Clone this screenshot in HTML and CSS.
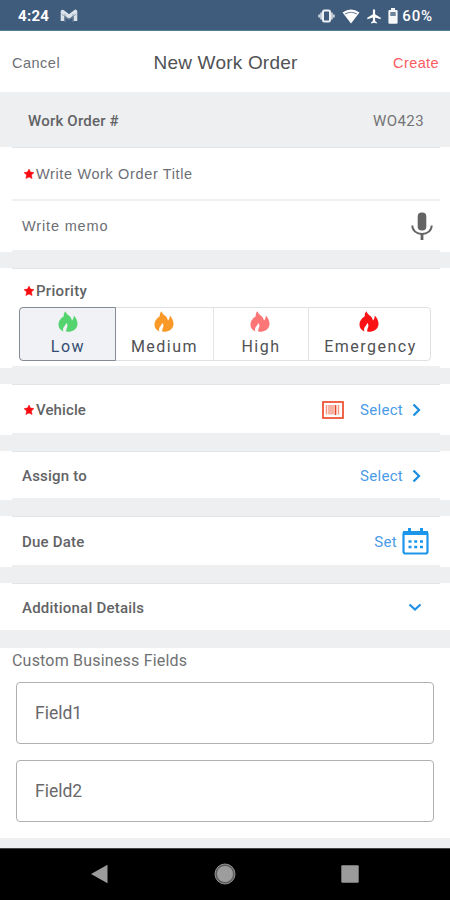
FILE: index.html
```html
<!DOCTYPE html>
<html lang="en">
<head>
<meta charset="utf-8">
<title>New Work Order</title>
<link rel="stylesheet" href="styles.css">
</head>
<body>
<svg class="defs" width="0" height="0">
  <symbol id="flame" viewBox="0 0 20 21"><path d="M7.600 .2C6.300 1.500 5.400 3 5.800 5.200C3 7.200 .5 9.800 .5 13.700C.5 16.800 2.200 19.200 5.400 20.400C4.600 18.300 5.100 16.400 6.600 14.900C7.500 14 8 13.100 8.200 12C9.400 13 9.700 14.200 9.300 15.500C8.900 17.200 8 18.300 8.200 20.500C9.500 20.900 11.200 20.900 12.600 20.600C16.800 19.700 19.500 16.600 19.500 12.800C19.500 9.500 18 6.600 15.700 4.500C15.700 6.500 15.400 8.300 14 9.500C13.300 8 13.100 6.800 12 5.600C10.400 3.900 7.900 2.800 7.600 .2Z" fill="currentColor"/></symbol>
  <symbol id="star" viewBox="0 0 10 10"><path d="M5 0L6.500 3.100L10 3.600L7.400 6L8.100 9.600L5 7.900L1.900 9.600L2.600 6L0 3.600L3.500 3.100Z" fill="#f90a10" stroke="#f90a10" stroke-width=".5"/></symbol>
  <symbol id="chevron" viewBox="0 0 9 14"><path d="M1.500 1.500L7 7L1.500 12.500" fill="none" stroke="#1e8ee0" stroke-width="2.300"/></symbol>
</svg>

<div class="status">
  <span class="clock">4:24</span>
  <svg class="mail" width="18" height="14" viewBox="0 0 18 14"><path d="M2.500 12V2.500L9 7.500L15.500 2.500V12" fill="none" stroke="#dbe2e9" stroke-width="3.600" stroke-linejoin="round"/><path d="M5 5V13M13 5V13M1.500 5L9 10.500L16.500 5" fill="none" stroke="#7f93a8" stroke-width=".8"/></svg>
  <div class="tray">
    <svg width="17" height="14" viewBox="0 0 17 14"><rect x="5" y="1.400" width="7" height="11.200" rx="1.500" fill="none" stroke="#eef2f6" stroke-width="2"/><path d="M3.200 3.500V10.500M13.800 3.500V10.500M1.200 5.500V8.500M15.800 5.500V8.500" stroke="#c9d4df" stroke-width="1.900"/></svg>
    <svg width="18" height="15" viewBox="0 0 18 15"><path d="M.5 3.500Q9-2.500 17.500 3.500L9 14.500Z" fill="#fff"/><path d="M3.200 5Q9 1.500 14.800 5" fill="none" stroke="#7289a1" stroke-width="1.100"/></svg>
    <svg width="14" height="15" viewBox="0 0 14 15"><path d="M7 .3C7.800 .3 8.100 1 8.100 1.800V5.200L13.700 8.800V10.300L8.100 8.500V12L9.800 13.300V14.500L7 13.700L4.200 14.500V13.300L5.900 12V8.500L.3 10.300V8.800L5.900 5.200V1.800C5.900 1 6.200 .3 7 .3Z" fill="#fff"/></svg>
    <svg width="10" height="16" viewBox="0 0 10 16"><path d="M3 0H7V2H8.500Q9.600 2 9.600 3V14.700Q9.600 15.700 8.500 15.700H1.500Q.4 15.700 .4 14.700V3Q.4 2 1.500 2H3Z" fill="#f5f7f9"/><path d="M2.300 4H7.700V8H2.300Z" fill="#6d849b"/></svg>
  </div>
  <span class="percent">60%</span>
</div>

<header class="header">
  <span class="cancel">Cancel</span>
  <span class="heading">New Work Order</span>
  <span class="create">Create</span>
</header>

<div class="number"><span class="label number-label">Work Order #</span><span class="code">WO423</span></div>
<div class="entry entry-title"><svg class="star" width="10" height="10"><use href="#star"/></svg><span class="entry-title-text">Write Work Order Title</span></div>
<div class="entry entry-memo"><span class="memo-text">Write memo</span>
  <svg width="22" height="28" viewBox="0 0 22 28"><rect x="6.700" y=".5" width="8.600" height="18" rx="4" fill="#646464"/><path d="M1.300 13.500C1.300 18.500 5.500 22 11 22S20.700 18.500 20.700 13.500" fill="none" stroke="#646464" stroke-width="1.900"/><path d="M11 22V28" stroke="#646464" stroke-width="2.800"/></svg>
</div>
<div class="gap"></div>

<section class="priority">
  <div class="priority-head"><svg class="star" width="10" height="10"><use href="#star"/></svg><span class="label priority-label">Priority</span></div>
  <div class="levels">
    <div class="level low"><svg width="20" height="21"><use href="#flame"/></svg><span>Low</span></div>
    <div class="level medium"><svg width="20" height="21"><use href="#flame"/></svg><span>Medium</span></div>
    <div class="level high"><svg width="20" height="21"><use href="#flame"/></svg><span>High</span></div>
    <div class="level emergency"><svg width="20" height="21"><use href="#flame"/></svg><span>Emergency</span></div>
  </div>
</section>
<div class="gap"></div>

<div class="row row-tall">
  <svg class="star" width="10" height="10"><use href="#star"/></svg><span class="label vehicle-label">Vehicle</span>
  <svg class="barcode" width="22" height="18" viewBox="0 0 22 18"><rect x="1" y="1" width="20" height="16" fill="#fff" stroke="#ef5638" stroke-width="1.800"/><path d="M4.500 4V13.500M7 4V13.500M9 4V13.500M11 4V13.500M16.500 4V13.500" stroke="#f49a85" stroke-width="1.500"/><path d="M13.500 4V14" stroke="#e94828" stroke-width="1.700"/></svg>
  <span class="link">Select</span>
  <svg class="chevron" width="9" height="14"><use href="#chevron"/></svg>
</div>
<div class="gap"></div>
<div class="row">
  <span class="label assign-label">Assign to</span>
  <span class="link push">Select</span>
  <svg class="chevron" width="9" height="14"><use href="#chevron"/></svg>
</div>
<div class="gap"></div>
<div class="row row-tall">
  <span class="label due-label">Due Date</span>
  <span class="link set push">Set</span>
  <svg class="calendar" width="27" height="27" viewBox="0 0 27 27"><rect x="1.500" y="4" width="24" height="21.500" rx="2" fill="none" stroke="#1c96ea" stroke-width="2.200"/><path d="M1 3H26V7H1ZM6 0H9V4H6ZM18 0H21V4H18Z" fill="#1c96ea"/><path d="M6.500 13.500H9.500M12.200 13.500H15.200M18 13.500H21M6.500 19H9.500M12.200 19H15.200M18 19H21" stroke="#1c96ea" stroke-width="2.600"/></svg>
</div>
<div class="gap"></div>
<div class="row">
  <span class="label details-label">Additional Details</span>
  <svg class="expand push" width="14" height="9" viewBox="0 0 14 9"><path d="M1.500 1.500L7 6.500L12.500 1.500" fill="none" stroke="#1e90e6" stroke-width="2.200"/></svg>
</div>
<div class="gap gap-last"></div>

<section class="custom">
  <h2>Custom Business Fields</h2>
  <div class="field">Field1</div>
  <div class="field">Field2</div>
</section>
<div class="bottom-edge"></div>
<nav class="nav">
  <svg width="17" height="20" viewBox="0 0 17 20"><path d="M0 10L16.500 .7V19.300Z" fill="#9b9b9b"/></svg>
  <svg width="22" height="22" viewBox="0 0 22 22"><circle cx="11" cy="11" r="10" fill="#5d5d5d"/><circle cx="11" cy="11" r="10" fill="none" stroke="#929292" stroke-width="1"/><circle cx="11" cy="11" r="8" fill="#9d9d9d"/></svg>
  <svg width="18" height="18" viewBox="0 0 18 18"><rect x=".3" y=".3" width="17.400" height="17.400" rx="1" fill="#9b9b9b"/></svg>
</nav>
</body>
</html>
```
FILE: styles.css
```css
* { box-sizing: border-box; }
body { margin: 0; width: 450px; height: 900px; overflow: hidden; background: #fff; color: #626365; font-family: Roboto, sans-serif; font-size: 15px; }
svg { display: block; flex: none; }
span { white-space: nowrap; }
.defs { position: absolute; }

.status { height: 31px; background: #3f5c7c; border-bottom: 1px solid #56809a; display: flex; align-items: center; padding: 2px 17px 0 18px; color: #fff; font-weight: 500; }
.clock { font-size: 15px; font-weight: 700; letter-spacing: .3px; }
.mail { margin-left: 11px; }
.tray { margin-left: auto; display: flex; align-items: center; gap: 7px; }
.percent { margin-left: 4px; font-size: 15px; letter-spacing: .9px; }

.header { height: 61px; display: grid; grid-template-columns: 1fr auto 1fr; align-items: center; padding: 2px 11px 0 12px; font-family: "Liberation Sans", sans-serif; font-size: 14.500px; }
.cancel { color: #6d7074; letter-spacing: .5px; }
.heading { font-size: 19px; color: #505256; letter-spacing: .2px; }
.create { color: #fb5a5f; text-align: right; letter-spacing: .4px; }

.label { font-weight: 500; }
.number { height: 56px; background: linear-gradient(#e3e5e7, #e3e5e7) 12px 55px / 428px 1px no-repeat, linear-gradient(#eeeff1, #eeeff1) 0 0 / 100% 55px no-repeat; display: flex; justify-content: space-between; align-items: center; padding: 2px 26px 0 28px; }
.number-label { letter-spacing: .2px; }
.code { letter-spacing: .4px; color: #737476; }
.entry { margin: 0 10px 0 12px; display: flex; align-items: center; font-family: "Liberation Sans", sans-serif; font-size: 14.500px; color: #6c6f75; }
.entry-title { height: 53px; border-bottom: 2px solid #f0f1f2; padding: 1px 0 0 12px; }
.star { margin-right: 2px; }
.entry-title-text { letter-spacing: .63px; }
.entry-memo { height: 49px; padding: 0 7px 0 10px; justify-content: space-between; }
.memo-text { letter-spacing: .85px; }
.gap { height: 19px; background: linear-gradient(#e2e5e7, #e2e5e7) 12px 18px / 428px 1px no-repeat, linear-gradient(#edeff1, #edeff1) 12px 0 / 428px 100% no-repeat, linear-gradient(#edeff1, #edeff1) 0 2px / 100% 16px no-repeat; }
.gap-last { height: 18px; background: #edeff1; }

.priority { height: 97px; padding: 15px 19px 0; }
.priority-head { display: flex; align-items: center; height: 14px; padding-left: 5px; }
.priority-label { letter-spacing: .3px; }
.levels { margin-top: 9px; width: 412px; height: 54px; display: grid; grid-template-columns: 96px 98px 95px 121px; border: 1px solid #dfe0e2; border-radius: 4px; }
.level { display: flex; flex-direction: column; align-items: center; padding-top: 3px; font-size: 16px; letter-spacing: 1.500px; color: #505153; border-right: 1px solid #e5e5e6; }
.level:last-child { border-right: 0; }
.level svg { position: relative; left: -1px; }
.level span { line-height: 20px; margin-top: 5px; color: #505153; }
.level.low { margin: -1px 0 -1px -1px; padding-top: 3px; border: 1px solid #858b94; border-radius: 4px 0 0 4px; background: #f0f2f5; color: #54d46f; }
.level.low svg { left: 0; }
.level.low span { color: #354d70; padding-left: 1px; }
.level.medium { color: #fb9928; }
.level.high { color: #fc7677; }
.level.emergency { color: #fa1113; }
.level.emergency span { padding-left: 2px; }

.row { height: 46px; display: flex; align-items: center; padding: 2px 21px 0 22px; }
.row-tall { height: 48px; }
.row .star { margin-left: 2px; }
.vehicle-label { letter-spacing: .1px; }
.assign-label, .details-label, .due-label { letter-spacing: .22px; }
.link { color: #4a9be8; letter-spacing: .3px; }
.push { margin-left: auto; }
.barcode { margin-left: auto; margin-right: 16px; }
.chevron { margin: 0 8px 0 9px; }
.row .chevron { margin-top: -1px; }
.set { margin-right: 5px; }
.calendar { margin-top: -2px; }
.expand { margin-right: 7px; margin-top: -2px; }

.custom { height: 190px; padding: 2px 16px 0; display: flex; flex-direction: column; }
.custom h2 { margin: 0 0 12px -4px; font-size: 16px; line-height: 21px; height: 20px; font-weight: 400; color: #707173; letter-spacing: .2px; }
.field { height: 62px; margin-bottom: 16px; border: 1.500px solid #b0b0b0; border-radius: 4px; padding: 0 0 0 18px; display: flex; align-items: center; font-size: 17.500px; color: #69696b; }
.bottom-edge { height: 10px; background: #edeff1; }
.nav { height: 52px; background: #000; border-top: 1px solid #444; display: flex; align-items: center; justify-content: space-between; padding: 0 91px 1px; }
```
